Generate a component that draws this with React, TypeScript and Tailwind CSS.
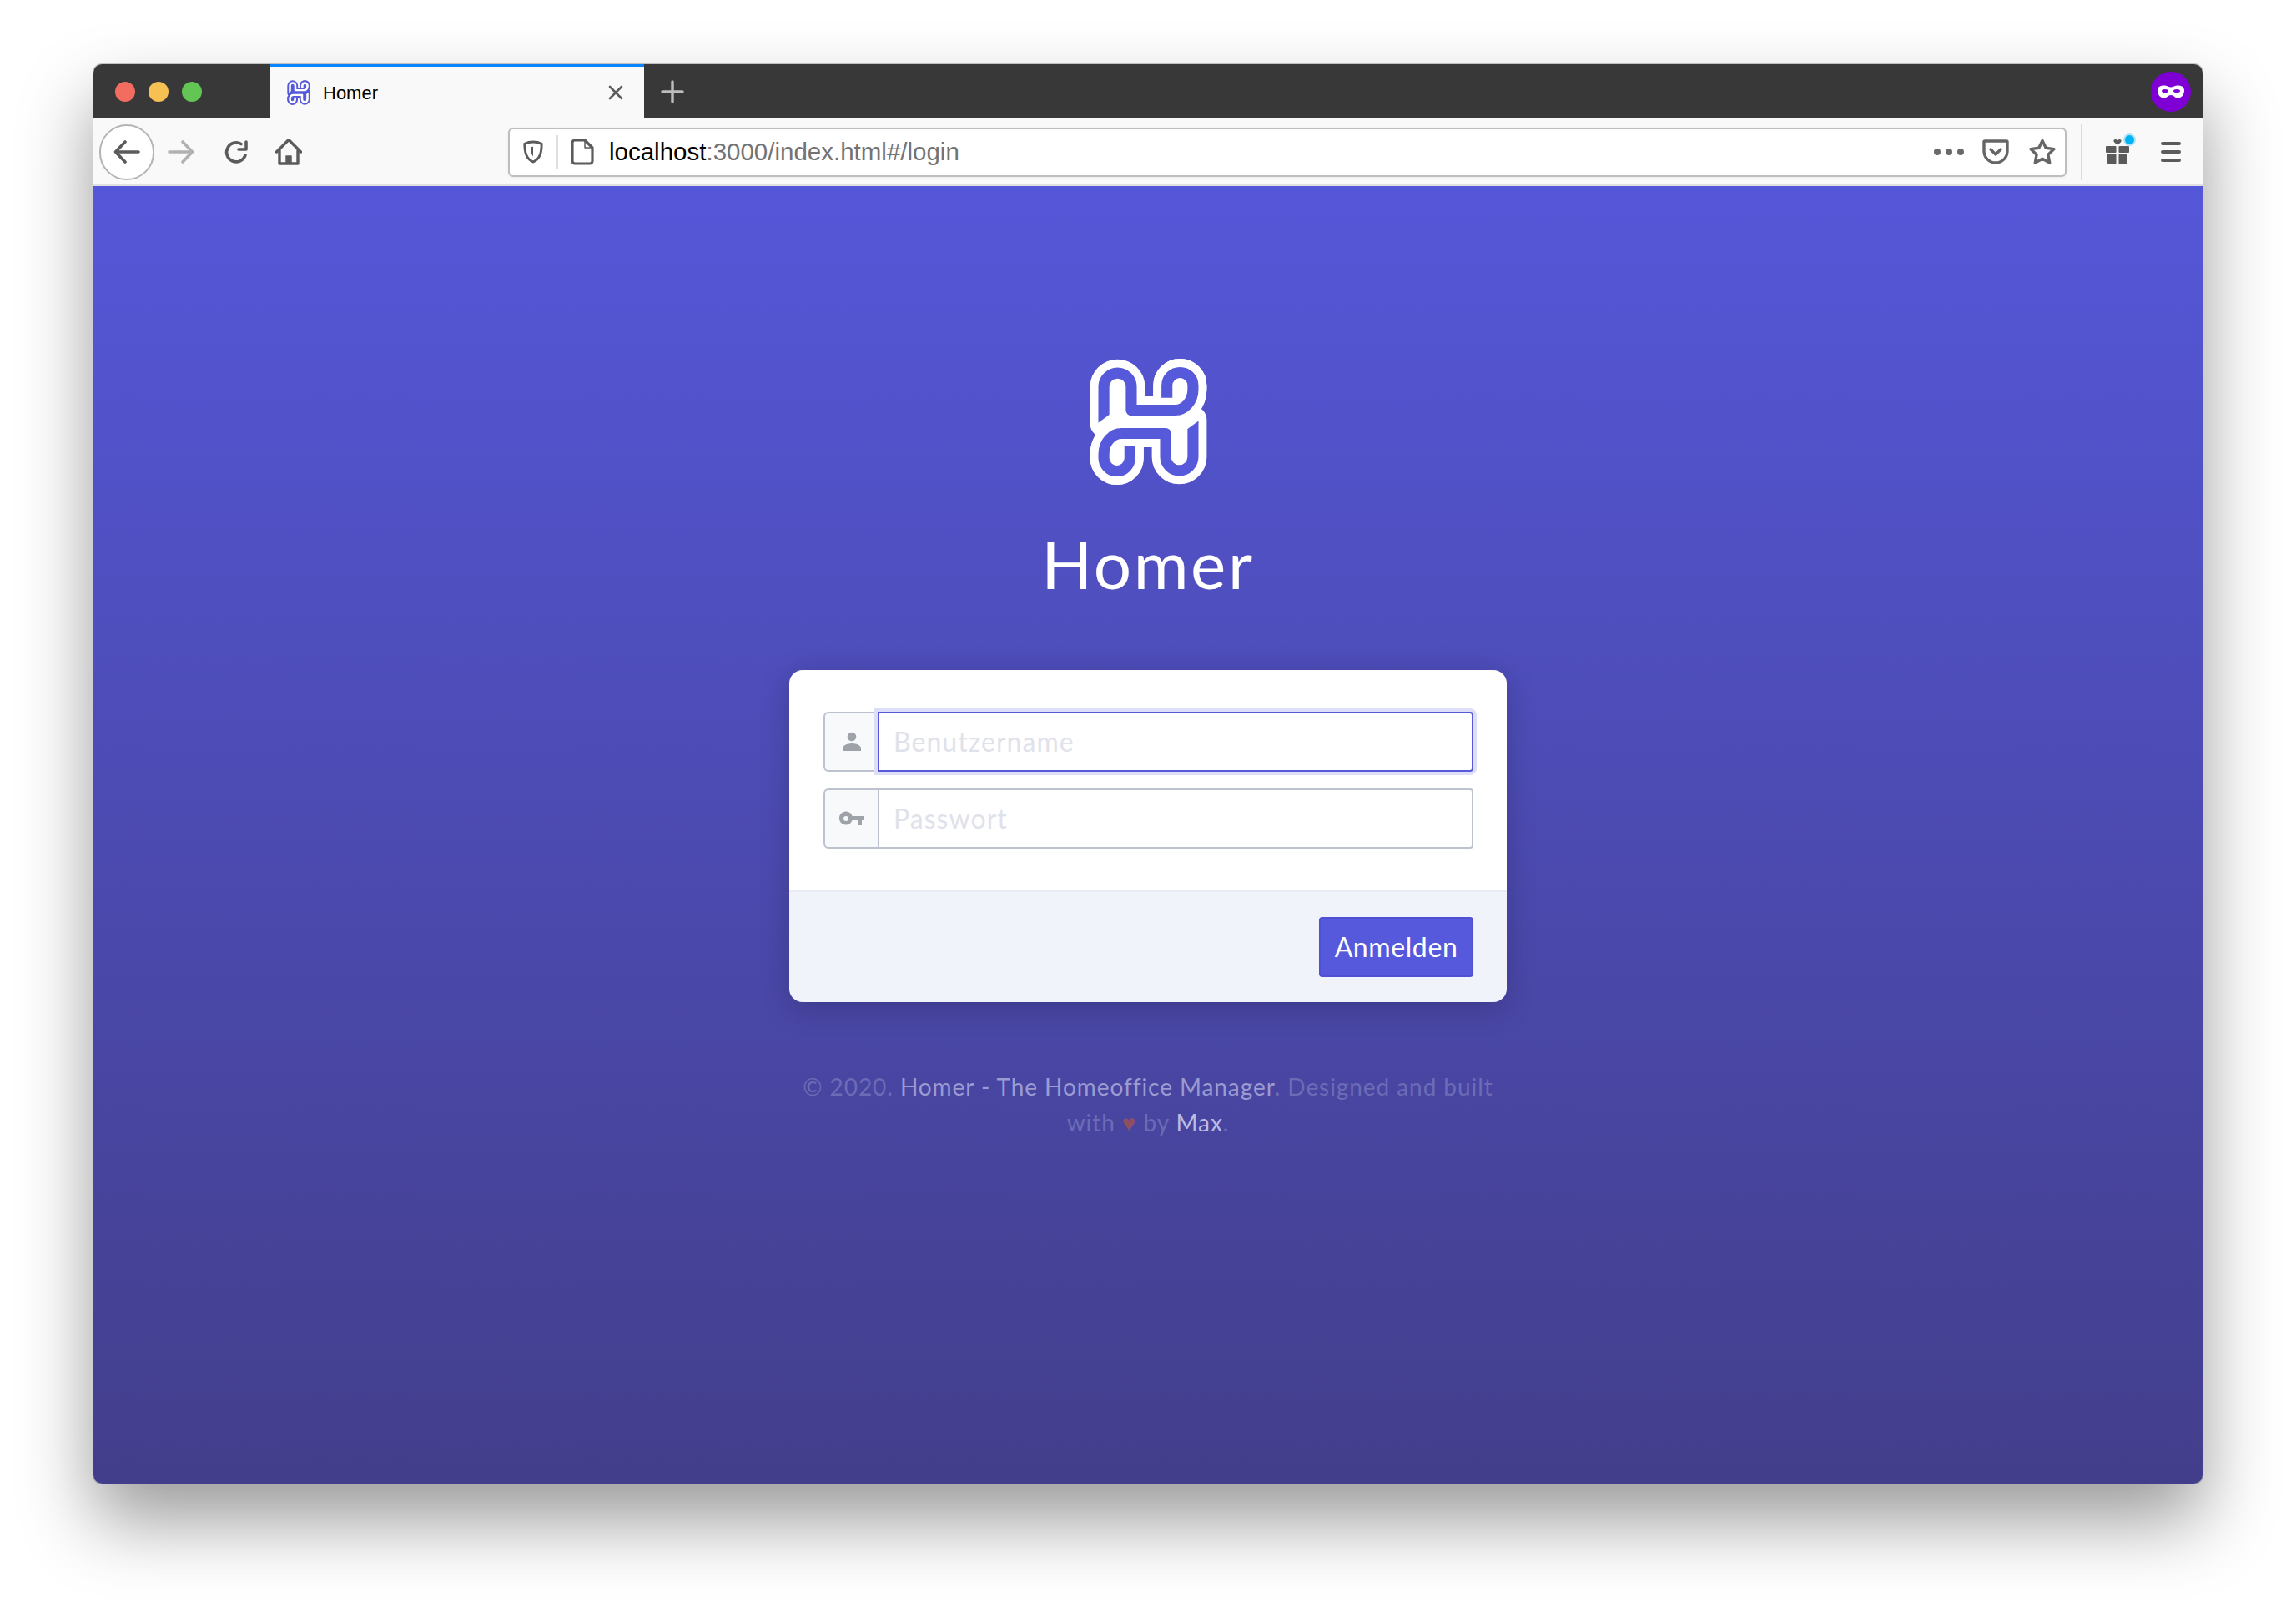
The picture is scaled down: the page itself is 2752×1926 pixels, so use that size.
import type { ReactNode } from "react"

function Logo({ className, edge = "#ffffff", band = "#5659d9" }: { className?: string; edge?: string; band?: string }) {
  const lobe = "H565A65 75 0 0 0 630 200V185A47.5 47 0 0 0 535 185V230"
  const ribbon = "M305 325V190A50 50 0 0 1 405 190V275" + lobe
  const flip = "rotate(180 467.5 317.5)"
  const base = (
    <>
      <path d={ribbon} stroke={edge} strokeWidth="100" strokeLinecap="round" />
      <path d={ribbon} stroke={band} strokeWidth="40" />
      <path d="M280 324L330 288V345H280Z" fill={edge} />
    </>
  )
  const top = (
    <>
      <path d={"M480 275" + lobe} stroke={edge} strokeWidth="100" />
      <path d={"M470 275" + lobe} stroke={band} strokeWidth="40" />
    </>
  )
  return (
    <svg viewBox="250 85 435 465" className={className} fill="none" strokeLinejoin="round">
      {base}
      <g transform={flip}>{base}</g>
      {top}
      <g transform={flip}>{top}</g>
      <path d="M355 190V318H580V445" stroke={edge} strokeWidth="44" strokeLinecap="round" />
    </svg>
  )
}

function Slot({ w, children }: { w: string; children: ReactNode }) {
  return <div className={`${w} flex shrink-0 items-center justify-center`}>{children}</div>
}

function Arrow({ left, color }: { left?: boolean; color: string }) {
  return (
    <svg viewBox="0 0 32 28" className="h-[28px] w-[32px]" fill="none" stroke={color} strokeWidth="3.6" strokeLinecap="round" strokeLinejoin="round">
      {left ? <path d="M30 14H3M14 2L2.5 14L14 26" /> : <path d="M2 14H29M18 2L29.5 14L18 26" />}
    </svg>
  )
}

function InputRow({ icon, placeholder, focused }: { icon: ReactNode; placeholder: string; focused?: boolean }) {
  return (
    <div className="flex h-[72px] w-[779px]">
      <div className="flex w-[67px] shrink-0 items-center justify-center rounded-l-[6px] border-2 border-[#bcc2cf] bg-[#f8f9fb]">{icon}</div>
      <input
        readOnly
        placeholder={placeholder}
        className={
          focused
            ? "relative -ml-[2px] min-w-0 flex-1 rounded-r-[4px] border-2 border-[#5659d9] bg-white pl-[17px] text-[32px] tracking-[1.05px] shadow-[0_0_0_4px_#dddef7] outline-none placeholder:text-[#dfe2ea]"
            : "relative -ml-[2px] min-w-0 flex-1 rounded-r-[4px] border-2 border-[#bcc2cf] bg-white pl-[17px] text-[32px] tracking-[1.05px] outline-none placeholder:text-[#dfe2ea]"
        }
      />
    </div>
  )
}

export default function App() {
  return (
    <div className="min-h-screen bg-white px-[112px] pt-[77px]">
      <div className="flex h-[1701px] flex-col overflow-hidden rounded-[10px] shadow-[0_0_0_1px_rgba(0,0,0,0.2),0_44px_88px_rgba(0,0,0,0.4)]">
        {/* tab strip */}
        <div className="flex h-[65px] shrink-0 items-stretch bg-[#383838]">
          <div className="flex w-[212px] items-center gap-4 pl-[26px]">
            <span className="h-6 w-6 rounded-full bg-[#f26d60]" />
            <span className="h-6 w-6 rounded-full bg-[#f7c052]" />
            <span className="h-6 w-6 rounded-full bg-[#62c554]" />
          </div>
          <div className="flex w-[448px] items-center border-t-[3px] border-[#0a84ff] bg-[#f9f9fa] pl-[20px] pr-[24px] font-['Liberation_Sans',sans-serif]">
            <Logo className="h-[30px] w-[28px]" edge="#5659d9" band="#ffffff" />
            <span className="ml-[15px] flex-1 text-[22px] text-black">Homer</span>
            <svg viewBox="0 0 20 20" className="h-5 w-5" fill="none" stroke="#5b5b5b" strokeWidth="2.6" strokeLinecap="round">
              <path d="M3 3L17 17M17 3L3 17" />
            </svg>
          </div>
          <div className="flex w-[68px] items-center justify-center">
            <svg viewBox="0 0 28 28" className="h-7 w-7" fill="none" stroke="#bdbdbd" strokeWidth="3.4" strokeLinecap="round">
              <path d="M14 2V26M2 14H26" />
            </svg>
          </div>
          <div className="flex flex-1 items-center justify-end pr-[14px]">
            <div className="flex h-12 w-12 items-center justify-center rounded-full bg-[#7e00d4]">
              <svg viewBox="0 0 32 16" className="h-4 w-8">
                <path d="M8 0.5C11 0.5 13.5 2.5 16 2.5C18.5 2.5 21 0.5 24 0.5C28.5 0.5 32 2 32 6.5C32 11.5 28.5 15.5 24.5 15.5C20.5 15.5 19.5 12 16 12C12.5 12 11.5 15.5 7.5 15.5C3.5 15.5 0 11.500 0 6.5C0 2 3.500 0.5 8 0.5Z" fill="#fff" />
                <ellipse cx="9" cy="7" rx="4" ry="2" fill="#7e00d4" />
                <ellipse cx="23" cy="7" rx="4" ry="2" fill="#7e00d4" />
              </svg>
            </div>
          </div>
        </div>

        {/* toolbar */}
        <div className="flex h-[81px] shrink-0 items-center border-b-2 border-[#e0e0e2] bg-[#f9f9fa] pl-[7px] pt-[1px]">
          <div className="flex h-[67px] w-[66px] shrink-0 items-center justify-center rounded-full border-2 border-[#b4b4b4] bg-white">
            <Arrow left color="#5b5b5b" />
          </div>
          <Slot w="w-[64px]"><Arrow color="#b1b1b3" /></Slot>
          <Slot w="w-[68px]">
            <svg viewBox="0 0 32 32" className="h-8 w-8" fill="none" stroke="#5b5b5b" strokeWidth="3.6" strokeLinecap="round" strokeLinejoin="round">
              <path d="M27 20A11.5 11.5 0 1 1 22 6.500" />
              <path d="M28 4V13H19" />
            </svg>
          </Slot>
          <Slot w="w-[58px]">
            <svg viewBox="0 0 32 32" className="h-8 w-8" fill="none" stroke="#5b5b5b" strokeWidth="3.4" strokeLinecap="round" strokeLinejoin="round">
              <path d="M1.500 16L16 1.500L30.500 16M5 13V30H27V13" />
              <path d="M13 30V21H19V30" fill="#5b5b5b" strokeWidth="1.500" />
            </svg>
          </Slot>

          {/* url bar */}
          <div className="ml-[234px] flex h-[59px] w-[1868px] shrink-0 items-center rounded-[6px] border-2 border-[#bebebe] bg-white pr-[9px] font-['Liberation_Sans',sans-serif] shadow-[0_1px_4px_rgba(0,0,0,0.06)]">
            <Slot w="w-[56px]">
              <svg viewBox="0 0 26 30" className="h-[28px] w-[24px]" fill="none" stroke="#5b5b5b" strokeWidth="3.200" strokeLinejoin="round">
                <path d="M13 2C17 2 21 3 24 4.500C24 16 22 24 13 28C4 24 2 16 2 4.500C5 3 9 2 13 2Z" />
                <path d="M13 8V21C10.500 18 10 13 10 9Z" fill="#5b5b5b" stroke="none" />
              </svg>
            </Slot>
            <div className="h-[41px] w-[2px] bg-[#dedede]" />
            <Slot w="w-[58px]">
              <svg viewBox="0 0 28 32" className="h-8 w-7" fill="none" stroke="#5b5b5b" strokeWidth="3.200" strokeLinejoin="round">
                <path d="M5 2H17L26 11V27A3 3 0 0 1 23 30H5A3 3 0 0 1 2 27V5A3 3 0 0 1 5 2Z" />
                <path d="M17 3V11H25" strokeWidth="1.500" />
              </svg>
            </Slot>
            <div className="flex-1 pl-[3px] text-[29.5px] text-[#737373]">
              <span className="text-black">localhost</span>:3000/index.html#/login
            </div>
            <div className="flex w-[36px] shrink-0 justify-between">
              <span className="h-2 w-2 rounded-full bg-[#6a6a6a]" />
              <span className="h-2 w-2 rounded-full bg-[#6a6a6a]" />
              <span className="h-2 w-2 rounded-full bg-[#6a6a6a]" />
            </div>
            <Slot w="w-[76px]">
              <svg viewBox="0 0 32 30" className="h-[30px] w-8" fill="none" stroke="#666" strokeWidth="3.400" strokeLinecap="round" strokeLinejoin="round">
                <path d="M3 2H29A1 1 0 0 1 30 3V14A14 14 0 0 1 2 14V3A1 1 0 0 1 3 2Z" />
                <path d="M10 12L16 18L22 12" />
              </svg>
            </Slot>
            <Slot w="w-[36px]">
              <svg viewBox="0 0 32 32" className="h-8 w-8" fill="none" stroke="#666" strokeWidth="3.400" strokeLinejoin="round">
                <path d="M16 2.500L20.200 11.300L30 12.600L22.900 19.300L24.700 29L16 24.300L7.300 29L9.100 19.300L2 12.600L11.800 11.300Z" />
              </svg>
            </Slot>
          </div>

          <div className="ml-[17px] h-[67px] w-[2px] shrink-0 bg-[#dcdcdc]" />
          <Slot w="w-[84px]">
            <div className="relative h-8 w-7">
              <svg viewBox="0 0 28 32" className="h-8 w-7" fill="#5b5b5b">
                <path d="M14 7.500C10 5 9 3.500 9.500 2C10.500 0.500 13 0.500 14 2.500C15 0.500 17.500 0.500 18.500 2C19 3.500 18 5 14 7.500Z" />
                <rect x="0" y="9" width="12.500" height="8" rx="1" />
                <rect x="15.500" y="9" width="12.500" height="8" rx="1" />
                <path d="M2 18.500H12.500V31H4A2 2 0 0 1 2 29Z" />
                <path d="M15.500 18.500H26V29A2 2 0 0 1 24 31H15.500Z" />
              </svg>
              <span className="absolute -right-[6px] -top-[4px] h-[11px] w-[11px] rounded-full bg-[#00b3f4] shadow-[0_0_0_2px_rgba(0,179,244,0.3)]" />
            </div>
          </Slot>
          <Slot w="w-[44px]">
            <div className="flex w-6 flex-col gap-[6px]">
              <span className="h-1 rounded-full bg-[#5b5b5b]" />
              <span className="h-1 rounded-full bg-[#5b5b5b]" />
              <span className="h-1 rounded-full bg-[#5b5b5b]" />
            </div>
          </Slot>
        </div>

        {/* login page */}
        <div className="flex flex-1 flex-col items-center bg-gradient-to-b from-[#5557d9] to-[#433e8b] pt-[206px] font-['Lato',sans-serif]">
          <Logo className="h-[153px] w-[143px]" />
          <div className="mt-[46px] text-[80px] leading-[94px] tracking-[2.6px] text-white">Homer</div>
          <div className="mt-[81px] w-[860px] overflow-hidden rounded-[16px] shadow-[0_6px_36px_rgba(0,0,0,0.2)]">
            <div className="flex flex-col items-end gap-5 bg-white px-[40px] pb-[50px] pt-[50px]">
              <InputRow
                focused
                placeholder="Benutzername"
                icon={
                  <svg viewBox="0 0 24 24" className="h-[24px] w-[24px]" fill="#9ea2a9">
                    <circle cx="12" cy="6" r="5.300" />
                    <path d="M1 23V20C1 16 7 14 12 14C17 14 23 16 23 20V23Z" />
                  </svg>
                }
              />
              <InputRow
                placeholder="Passwort"
                icon={
                  <svg viewBox="0 0 30 18" className="h-[18px] w-[30px]" fill="#9ea2a9">
                    <path fillRule="evenodd" d="M8 0.500A8 8 0 0 1 15.500 6H30V11H27V17H22V11H15.500A8 8 0 1 1 8 0.500ZM8 6A3 3 0 1 0 8 12A3 3 0 1 0 8 6Z" />
                  </svg>
                }
              />
            </div>
            <div className="flex justify-end border-t-2 border-[#e8ebf3] bg-[#f0f3f9] px-[40px] pb-[30px] pt-[30px]">
              <button className="h-[72px] w-[185px] rounded-[4px] border-2 border-[#4f50d5] bg-[#5759dc] text-[32px] tracking-[0.6px] text-white">
                Anmelden
              </button>
            </div>
          </div>
          <div className="mt-[80px] text-center text-[28px] leading-[43px] tracking-[0.93px] text-[#6c6cb6]">
            © 2020. <span className="text-[#9b9bd2]">Homer - The Homeoffice Manager</span>. Designed and built
            <br />
            with <span className="text-[#8e4f63]">♥</span> by <span className="text-[#bcbce0]">Max</span>.
          </div>
        </div>
      </div>
    </div>
  )
}
